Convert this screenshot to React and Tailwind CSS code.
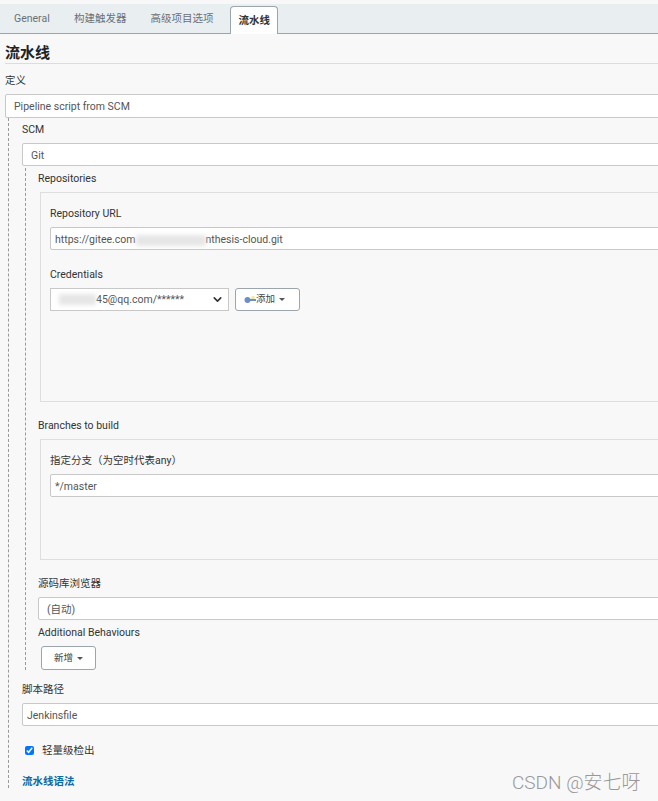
import React from "react";
import { ChevronDown } from "lucide-react";

function Label({ className = "", children }) {
  return <div className={`h-[14px] leading-[16px] whitespace-nowrap ${className}`}>{children}</div>;
}

function Field({ className = "pl-[8px] h-[23px]", children }) {
  return (
    <div className={`mt-[7px] pt-[3px] flex items-center leading-none bg-white border border-[#c8c8c8] rounded-[2px] whitespace-nowrap text-[#555] ${className}`}>
      {children}
    </div>
  );
}

function Caret() {
  return <span className="ml-[4px] w-0 h-0 border-x-[3px] border-x-transparent border-t-[3px] border-t-[#555]" />;
}

function Smudge({ className = "" }) {
  return <span className={`inline-block h-[11px] bg-[#e6e6e6] blur-[2px] ${className}`} />;
}

function App() {
  return (
    <div className="relative w-[658px] h-[801px] overflow-hidden bg-[#f8f8f8] pt-[4px] text-[10.5px] text-[#333] font-['Roboto','Noto_Sans_CJK_SC',sans-serif]">
      {/* tabs */}
      <div className="h-[30px] flex items-end bg-[#e9eef1] border-b border-[#9aa5ae] text-[#6b7075]">
        <div className="h-[29px] w-[35px] leading-[30px] ml-[14px]">General</div>
        <div className="h-[29px] leading-[30px] ml-[25px]">构建触发器</div>
        <div className="h-[29px] leading-[30px] ml-[24px]">高级项目选项</div>
        <div className="h-[28px] -mb-px leading-[27px] ml-[16px] pl-[8px] pr-[7px] bg-white border border-b-0 border-[#9aa5ae] rounded-t-[4px] font-semibold text-[#333]">
          流水线
        </div>
      </div>

      <div className="w-[700px] px-[5px]">
        <div className="h-[30px] pt-[9px] border-b border-[#dcdcdc] text-[15px] leading-[20px] font-bold text-[#222]">流水线</div>

        <Label className="mt-[9px]">定义</Label>
        <Field className="pl-[8px] h-[24px]">Pipeline script from SCM</Field>

        <div className="ml-[3px] pl-[13px] pt-[4px] h-[670px] border-l border-dashed border-[#999]">
          <Label>SCM</Label>
          <Field>Git</Field>

          <div className="ml-[3px] mt-[2px] pl-[12px] pt-[3px] h-[502px] border-l border-dashed border-[#999]">
            <Label>Repositories</Label>
            <div className="ml-[2px] mt-[7px] h-[210px] pl-[9px] pt-[13px] border border-[#dedede]">
              <Label>Repository URL</Label>
              <Field className="pl-[4px] h-[23px]">
                https://gitee.com
                <Smudge className="w-[70px]" />
                nthesis-cloud.git
              </Field>
              <Label className="mt-[17px]">Credentials</Label>
              <div className="mt-[7px] flex">
                <div className="w-[179px] h-[23px] pl-[8px] pr-[4px] flex items-center bg-white border border-[#c8c8c8] text-[#555] whitespace-nowrap">
                  <Smudge className="w-[37px]" />
                  45@qq.com/******
                  <ChevronDown size={13} strokeWidth={3} className="ml-auto text-[#333]" />
                </div>
                <button className="ml-[6px] w-[65px] h-[23px] flex items-center pl-[8px] bg-white border border-[#9aa5ae] rounded-[3px] text-[9.5px] text-[#444]">
                  <svg width="12" height="8" viewBox="0 0 12 8" className="blur-[0.5px] shrink-0">
                    <circle cx="9" cy="2" r="2" fill="#f5e9a0" />
                    <circle cx="3.5" cy="4" r="3" fill="#6d8fc4" />
                    <path d="M4 4h8" stroke="#6d8fc4" strokeWidth="2" />
                  </svg>
                  添加
                  <Caret />
                </button>
              </div>
            </div>

            <Label className="mt-[16px]">Branches to build</Label>
            <div className="ml-[2px] mt-[7px] h-[121px] pl-[9px] pt-[13px] border border-[#dedede]">
              <Label>指定分支（为空时代表any）</Label>
              <Field className="pl-[4px] h-[23px]">*/master</Field>
            </div>

            <Label className="mt-[16px]">源码库浏览器</Label>
            <Field>(自动)</Field>
            <Label className="mt-[5px]">Additional Behaviours</Label>
            <button className="ml-[3px] mt-[7px] w-[55px] h-[24px] flex items-center justify-center bg-white border border-[#9aa5ae] rounded-[3px] text-[9.5px] text-[#444]">
              新增
              <Caret />
            </button>
          </div>

          <Label className="mt-[12px]">脚本路径</Label>
          <Field className="pl-[4px] h-[23px]">Jenkinsfile</Field>
          <div className="mt-[17px] h-[14px] flex items-center">
            <input type="checkbox" defaultChecked readOnly className="ml-[3px] m-0 w-[9px] h-[9px] accent-[#0075ff]" />
            <span className="ml-[8px] pt-[2px]">轻量级检出</span>
          </div>
          <Label className="mt-[17px] font-semibold text-[#0b6aa2]">流水线语法</Label>
        </div>
      </div>

      {/* watermark */}
      <div className="absolute left-[512px] top-[771px] text-[19px] leading-[24px] font-light text-[#999] whitespace-nowrap">CSDN @安七呀</div>
    </div>
  );
}

export default App;
